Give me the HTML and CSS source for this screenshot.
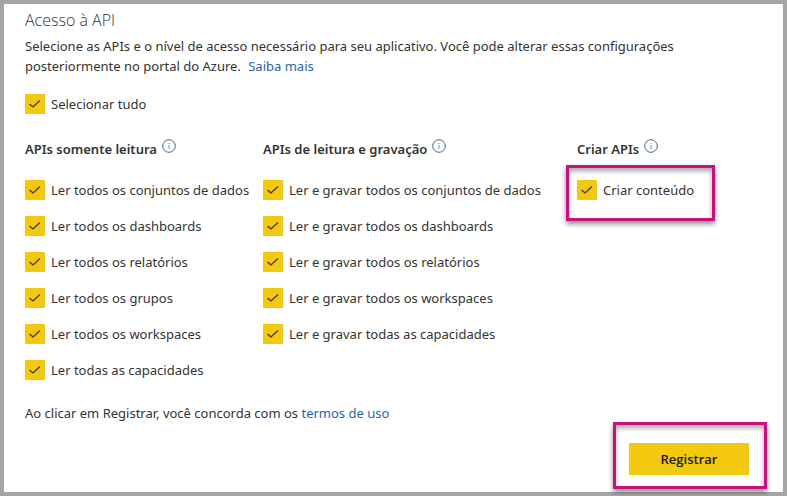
FILE: index.html
```html
<!DOCTYPE html>
<html lang="pt-BR">
<head>
<meta charset="utf-8">
<meta name="viewport" content="width=device-width, initial-scale=1">
<title>Acesso à API</title>
<link rel="stylesheet" href="styles.css">
</head>
<body>
<svg class="sprite" aria-hidden="true">
  <symbol id="info" viewBox="0 0 14 14">
    <circle cx="7" cy="7" r="6.3" fill="none" stroke="#4a6484" stroke-width="1"/>
    <path d="M7 6v4" stroke="#4a9ad4" stroke-width="1"/>
    <path d="M7 4v1" stroke="#4a9ad4" stroke-width="1"/>
  </symbol>
</svg>
<form class="panel">
  <h1 class="title">Acesso à API</h1>
  <p class="intro">Selecione as APIs e o nível de acesso necessário para seu aplicativo. Você pode alterar essas configurações posteriormente no portal do Azure. <a class="link more" href="#">Saiba mais</a></p>
  <label class="option all"><input class="check" type="checkbox" checked>Selecionar tudo</label>
  <div class="groups">
    <section class="group">
      <h2 class="heading">APIs somente leitura<svg class="info"><use href="#info"/></svg></h2>
      <label class="option"><input class="check" type="checkbox" checked>Ler todos os conjuntos de dados</label>
      <label class="option"><input class="check" type="checkbox" checked>Ler todos os dashboards</label>
      <label class="option"><input class="check" type="checkbox" checked>Ler todos os relatórios</label>
      <label class="option"><input class="check" type="checkbox" checked>Ler todos os grupos</label>
      <label class="option"><input class="check" type="checkbox" checked>Ler todos os workspaces</label>
      <label class="option"><input class="check" type="checkbox" checked>Ler todas as capacidades</label>
    </section>
    <section class="group">
      <h2 class="heading">APIs de leitura e gravação<svg class="info"><use href="#info"/></svg></h2>
      <label class="option"><input class="check" type="checkbox" checked>Ler e gravar todos os conjuntos de dados</label>
      <label class="option"><input class="check" type="checkbox" checked>Ler e gravar todos os dashboards</label>
      <label class="option"><input class="check" type="checkbox" checked>Ler e gravar todos os relatórios</label>
      <label class="option"><input class="check" type="checkbox" checked>Ler e gravar todos os workspaces</label>
      <label class="option"><input class="check" type="checkbox" checked>Ler e gravar todas as capacidades</label>
    </section>
    <section class="group">
      <h2 class="heading">Criar APIs<svg class="info"><use href="#info"/></svg></h2>
      <label class="option callout callout-option"><input class="check" type="checkbox" checked>Criar conteúdo</label>
    </section>
  </div>
  <p class="terms">Ao clicar em Registrar, você concorda com os <a class="link" href="#">termos de uso</a></p>
  <div class="actions callout callout-action"><button class="submit" type="button">Registrar</button></div>
</form>
</body>
</html>
```

FILE: styles.css
```css
* {
  box-sizing: border-box;
}

body {
  margin: 0;
  background: #fff;
  color: #333;
  font: 13px/20px "Noto Sans", "Open Sans", sans-serif;
}

.sprite {
  position: absolute;
  width: 0;
  height: 0;
}

.panel {
  min-height: 100vh;
  padding: 4px 34px 16px 21px;
  border: 4px solid #a5a5a5;
}

.title {
  margin: 0;
  font-family: "Open Sans", sans-serif;
  font-size: 16px;
  font-weight: 300;
  line-height: 24px;
}

.intro {
  max-width: 700px;
  margin: 4px 0 18px;
}

.link {
  color: #1f66b0;
  text-decoration: none;
}

.more {
  margin-left: 4px;
}

.option {
  display: flex;
  align-items: center;
  gap: 6px;
  width: max-content;
}

.check {
  appearance: none;
  flex: none;
  width: 20px;
  height: 20px;
  margin: 0;
  border: 1px solid #f2c811;
}

.check:checked {
  background: #f2c811 url("data:image/svg+xml,%3Csvg xmlns='http://www.w3.org/2000/svg' viewBox='0 0 18 18'%3E%3Cpath d='M3.5 9l3.5 3 7-6.500' fill='none' stroke='%23403a1c' stroke-width='1.3'/%3E%3C/svg%3E") center / 18px no-repeat;
}

.groups {
  display: grid;
  grid-template-columns: 238fr 314fr 172fr;
  margin-top: 25px;
}

.group {
  display: flex;
  flex-direction: column;
  gap: 16px;
}

.heading {
  display: flex;
  gap: 5px;
  margin: 0 0 5px;
  font-size: 13px;
  font-weight: 600;
  line-height: 20px;
}

.info {
  width: 14px;
  height: 14px;
}

.terms {
  margin: 23px 0 20px;
}

.callout {
  position: relative;
}

.callout::after {
  content: "";
  position: absolute;
  border: 3px solid #c9117e;
  box-shadow: 0 3px 5px rgba(0, 0, 0, 0.45), inset 0 3px 5px rgba(0, 0, 0, 0.35);
  pointer-events: none;
}

.callout-option::after {
  inset: -15px -21px -21px -11px;
}

.callout-action::after {
  inset: -21px -18px -14px -16px;
}

.actions {
  width: max-content;
  margin-left: auto;
}

.submit {
  display: block;
  width: 120px;
  height: 32px;
  padding: 0;
  border: 0;
  background: #f2c811;
  color: #1a1a1a;
  font: 600 13px/20px "Open Sans", "Noto Sans", sans-serif;
}
```
